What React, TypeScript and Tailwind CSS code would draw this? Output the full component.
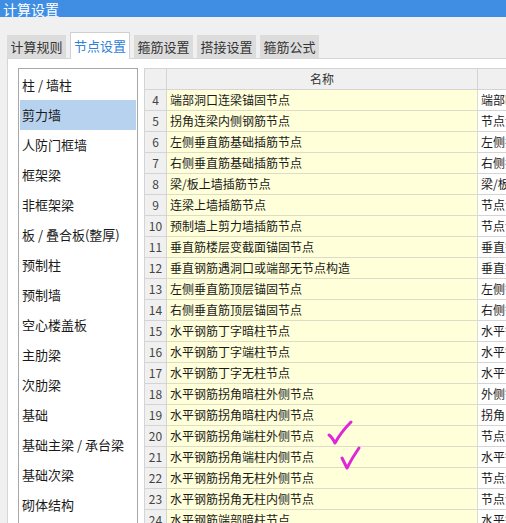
import React from 'react';

const categories = [
  '柱 / 墙柱',
  '剪力墙',
  '人防门框墙',
  '框架梁',
  '非框架梁',
  '板 / 叠合板(整厚)',
  '预制柱',
  '预制墙',
  '空心楼盖板',
  '主肋梁',
  '次肋梁',
  '基础',
  '基础主梁 / 承台梁',
  '基础次梁',
  '砌体结构',
];

const rows: [number, string, string][] = [
  [4, '端部洞口连梁锚固节点', '端部暗柱节点'],
  [5, '拐角连梁内侧钢筋节点', '节点设置'],
  [6, '左侧垂直筋基础插筋节点', '左侧插筋'],
  [7, '右侧垂直筋基础插筋节点', '右侧插筋'],
  [8, '梁/板上墙插筋节点', '梁/板上插筋'],
  [9, '连梁上墙插筋节点', '节点设置'],
  [10, '预制墙上剪力墙插筋节点', '节点设置'],
  [11, '垂直筋楼层变截面锚固节点', '垂直钢筋'],
  [12, '垂直钢筋遇洞口或端部无节点构造', '垂直钢筋'],
  [13, '左侧垂直筋顶层锚固节点', '左侧钢筋'],
  [14, '右侧垂直筋顶层锚固节点', '右侧钢筋'],
  [15, '水平钢筋丁字暗柱节点', '水平钢筋'],
  [16, '水平钢筋丁字端柱节点', '水平钢筋'],
  [17, '水平钢筋丁字无柱节点', '水平钢筋'],
  [18, '水平钢筋拐角暗柱外侧节点', '外侧钢筋'],
  [19, '水平钢筋拐角暗柱内侧节点', '拐角 钢筋'],
  [20, '水平钢筋拐角端柱外侧节点', '节点设置'],
  [21, '水平钢筋拐角端柱内侧节点', '水平钢筋'],
  [22, '水平钢筋拐角无柱外侧节点', '节点设置'],
  [23, '水平钢筋拐角无柱内侧节点', '节点设置'],
  [24, '水平钢筋端部暗柱节点', '水平钢筋'],
];

const tabs = ['计算规则', '节点设置', '箍筋设置', '搭接设置', '箍筋公式'];

const App: React.FC = () => {
  return (
    <div
      className="w-[506px] h-[523px] overflow-hidden bg-[#f0f0f0] text-[#1a1a1a]"
      style={{ fontFamily: '"Noto Sans CJK SC", "Liberation Sans", sans-serif' }}
    >
      {/* title bar */}
      <div className="h-[17px] bg-[#3f8ee3] flex items-center pl-[3px] text-white text-[14px] leading-none">
        计算设置
      </div>

      <div className="pl-[7px] pt-[15px]">
        {/* tabs */}
        <div className="flex items-end h-[26px] gap-[4px] relative z-10">
          {tabs.map((t, i) =>
            i === 1 ? (
              <div
                key={t}
                className="h-[27px] w-[60px] bg-white border border-b-0 border-[#d0d0d0] flex items-center justify-center text-[13px] text-[#2f7fd6] -mb-[1px]"
              >
                {t}
              </div>
            ) : (
              <div
                key={t}
                className="h-[23px] w-[59px] bg-[#dcdcdc] flex items-center justify-center text-[13px] text-[#333]"
              >
                {t}
              </div>
            )
          )}
        </div>

        {/* panel */}
        <div className="bg-white border-l border-t border-[#d6d6d6] h-[500px] flex pl-[10px] pt-[9px] gap-[6px]">
          {/* left list */}
          <div className="w-[120px] shrink-0 border border-[#a8a8a8] px-[1px] pt-[1px] h-[480px]">
            {categories.map((c, i) => (
              <div
                key={c}
                className={`h-[30px] flex items-center pl-[2px] text-[13px] ${
                  i === 1 ? 'bg-[#b7d2ef]' : ''
                }`}
              >
                {c}
              </div>
            ))}
          </div>

          {/* table */}
          <div className="relative flex-1 overflow-hidden">
            <table className="border-collapse table-fixed w-[420px] text-[12px]">
              <colgroup>
                <col className="w-[22px]" />
                <col className="w-[311px]" />
                <col className="w-[87px]" />
              </colgroup>
              <thead>
                <tr className="h-[21px] bg-[#f0f0f0]">
                  <th className="border border-[#d4d4d4] font-normal"></th>
                  <th className="border border-[#d4d4d4] font-normal text-[#333]">名称</th>
                  <th className="border border-[#d4d4d4] font-normal"></th>
                </tr>
              </thead>
              <tbody>
                {rows.map(([n, name, desc]) => (
                  <tr key={n} className="h-[21px]">
                    <td className="border border-[#d4d4d4] bg-[#f0f0f0] text-center text-[#444] leading-none">
                      {n}
                    </td>
                    <td className="border border-[#dcdcc8] bg-[#ffffd9] pl-[3px] leading-none whitespace-nowrap">
                      {name}
                    </td>
                    <td className="border border-[#d4d4d4] bg-white pl-[3px] leading-none whitespace-nowrap overflow-hidden">
                      {desc}
                    </td>
                  </tr>
                ))}
              </tbody>
            </table>

            {/* hand-drawn check marks */}
            <svg
              className="absolute left-[182px] top-[350px]"
              width="40"
              height="60"
              viewBox="0 0 40 60"
              fill="none"
            >
              <path
                d="M3 17 Q6 19 9 25 Q15 14 25 4"
                stroke="#e027d8"
                strokeWidth="3"
                strokeLinecap="round"
                strokeLinejoin="round"
              />
              <path
                d="M16 40 Q18 44 21 50 Q26 40 33 30"
                stroke="#e027d8"
                strokeWidth="3"
                strokeLinecap="round"
                strokeLinejoin="round"
              />
            </svg>
          </div>
        </div>
      </div>
    </div>
  );
};

export default App;
